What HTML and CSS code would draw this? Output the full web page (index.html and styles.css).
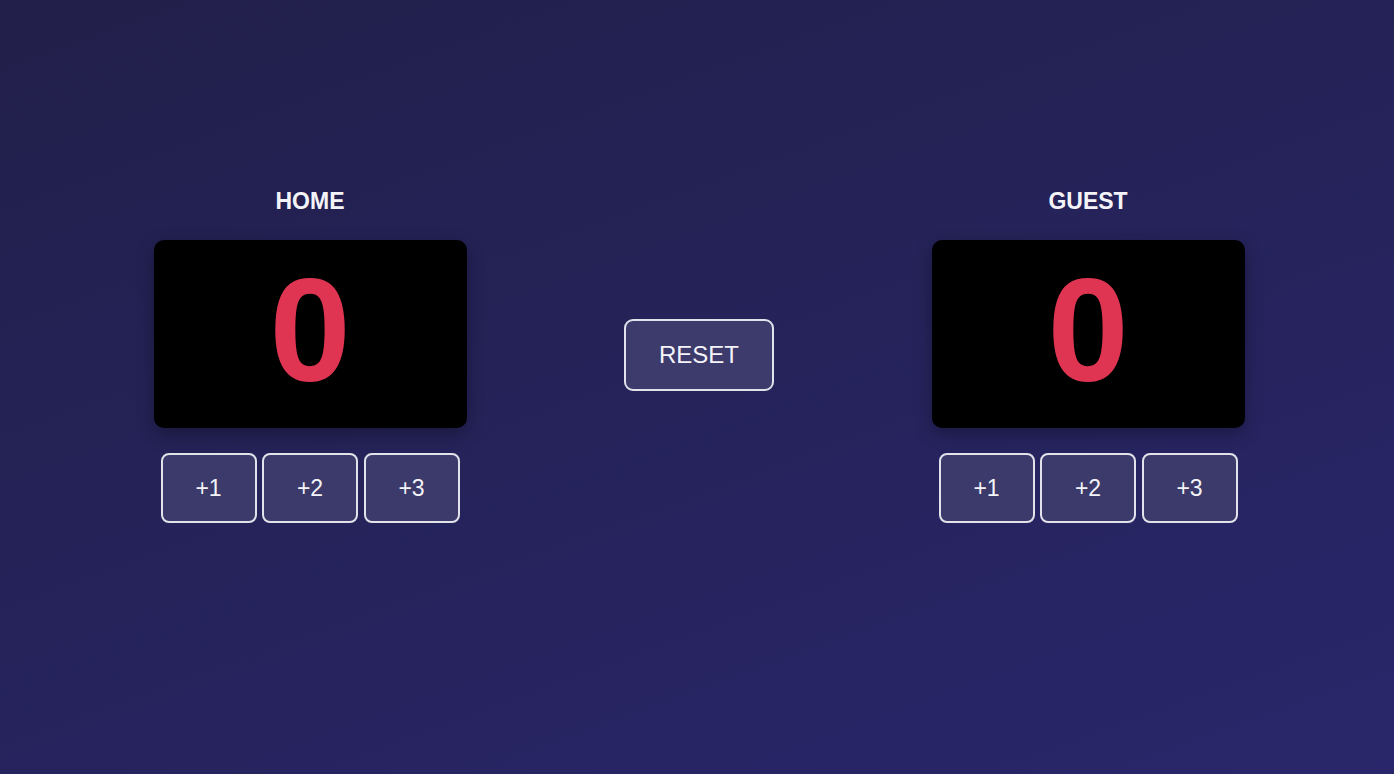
FILE: index.html
```html
<!DOCTYPE html>
<html lang="en">
<head>
<meta charset="utf-8">
<title>Scoreboard</title>
<link rel="stylesheet" href="styles.css">
</head>
<body>
<main class="board">
  <section class="team">
    <h2 class="team-name">HOME</h2>
    <div class="score">0</div>
    <div class="btns">
      <button class="btn">+1</button>
      <button class="btn">+2</button>
      <button class="btn">+3</button>
    </div>
  </section>
  <button class="reset">RESET</button>
  <section class="team">
    <h2 class="team-name">GUEST</h2>
    <div class="score">0</div>
    <div class="btns">
      <button class="btn">+1</button>
      <button class="btn">+2</button>
      <button class="btn">+3</button>
    </div>
  </section>
</main>
</body>
</html>
```
FILE: styles.css
```css
* { box-sizing: border-box; }
html, body { margin: 0; height: 100%; }
body {
  font-family: "Liberation Sans", Arial, sans-serif;
  background: linear-gradient(160deg, #221f4a 0%, #25235a 50%, #29266b 100%);
  color: #f2f2f7;
  min-height: 100vh;
}
.board {
  display: flex;
  justify-content: center;
  align-items: center;
  gap: 157.5px;
  padding: 187px 0 0 4px;
}
.team {
  width: 313px;
  display: flex;
  flex-direction: column;
  align-items: center;
}
.team-name {
  margin: 0 0 25px;
  font-size: 23px;
  line-height: 28px;
  font-weight: 700;
  color: #f4f4f8;
}
.score {
  width: 313px;
  height: 188px;
  background: #000;
  border-radius: 10px;
  box-shadow: 0 6px 18px rgba(0, 0, 0, 0.3);
  color: #e03552;
  font-weight: 700;
  font-size: 146px;
  line-height: 1;
  display: flex;
  align-items: center;
  justify-content: center;
  padding-bottom: 6px;
}
.btns {
  margin-top: 25px;
  display: flex;
  gap: 5.5px;
}
.btn, .reset {
  font-family: "Liberation Sans", Arial, sans-serif;
  background: #3c3a6b;
  color: #f4f4f8;
  border: 2px solid #e2e2ea;
  border-radius: 8px;
  cursor: pointer;
}
.btn {
  width: 96px;
  height: 70px;
  font-size: 23px;
}
.reset {
  width: 150px;
  height: 72px;
  font-size: 24px;
  border-radius: 9px;
  background: #3d3a6c;
}
```
